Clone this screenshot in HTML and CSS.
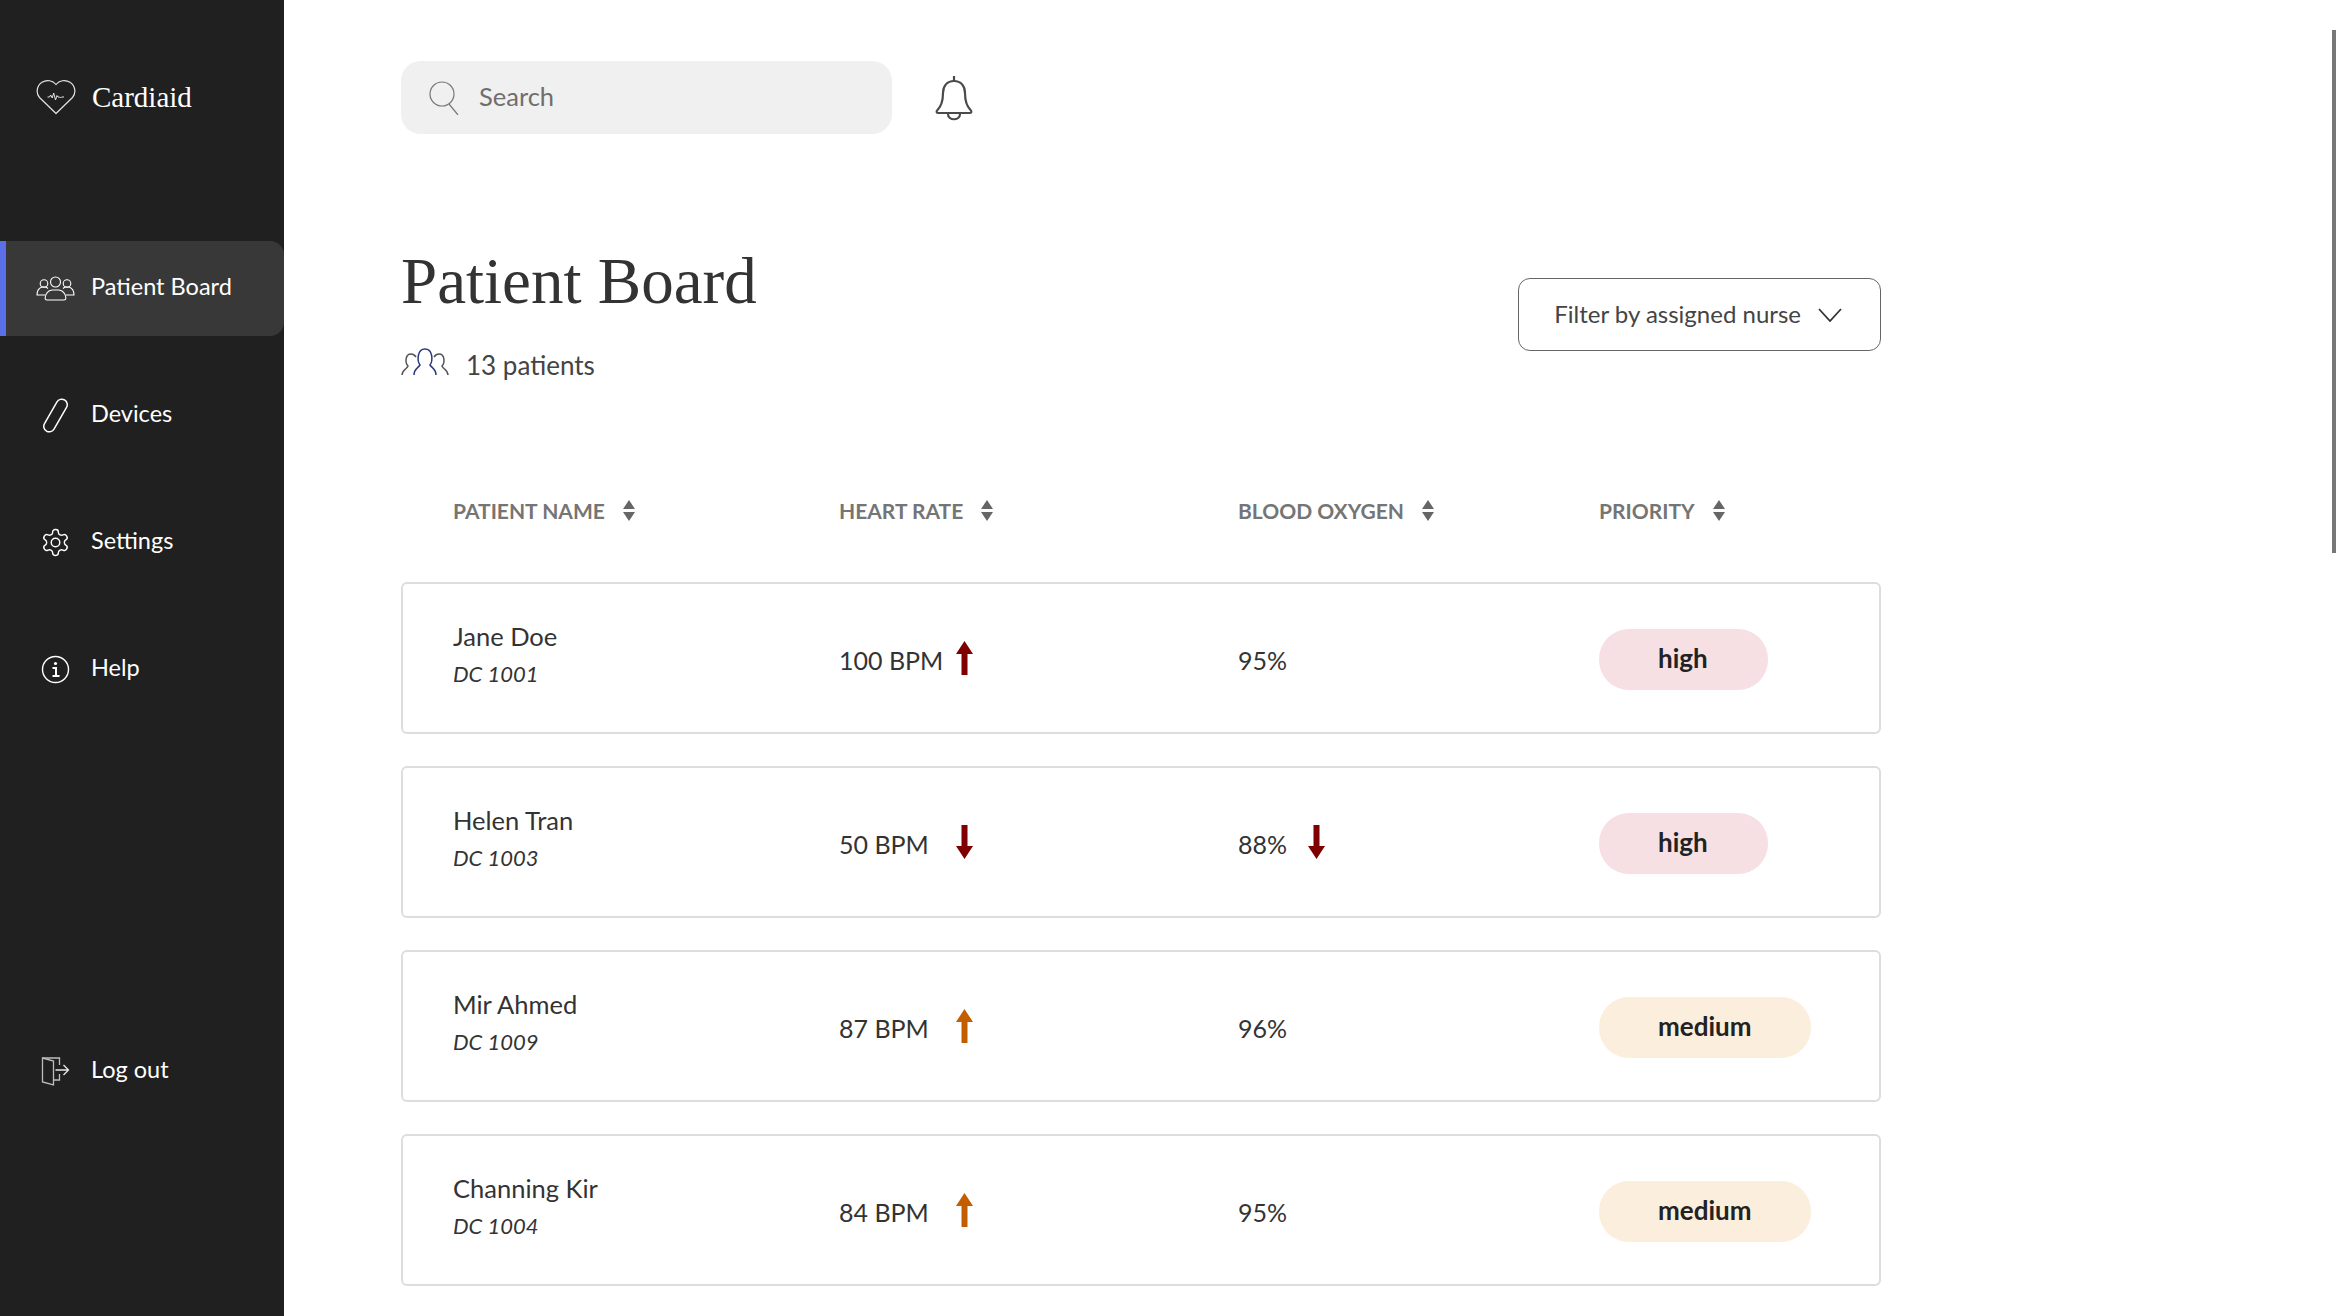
FILE: index.html
```html
<!DOCTYPE html>
<html lang="en">

<head>
    <meta charset="utf-8">
    <title>Cardiaid - Patient Board</title>
    <link rel="stylesheet" href="styles.css">
</head>

<body>
    <div class="app">
        <!-- sidebar -->
        <aside class="sidebar">
            <div class="brand">
                <svg class="brand-icon" viewBox="0 0 40 36" fill="none" stroke="#e4e4e4" stroke-width="1.2">
                    <path d="M20 34.5 3.5 18.5C-.5 14 .8 6.5 6 3.200 11 .2 16.800 1.500 20 5.500 23.200 1.500 29 .2 34 3.200 39.200 6.500 40.500 14 36.500 18.500Z" stroke-linejoin="round"/>
                    <path d="M11.500 18h2l1.200-2 1.500 3 1.500-5 1.800 7 1.500-4.500 1 1.500h1.500l1 1 1-1h2.500" stroke-width="1"/>
                </svg>
                <span class="brand-name">Cardiaid</span>
            </div>
            <nav class="nav-list">
                <a class="nav-item active" href="#">
                    <svg class="nav-icon" height="25" viewBox="0 0 39 25" fill="none" stroke="#fff" stroke-width="1.100">
                        <circle cx="19.500" cy="6" r="5"/>
                        <circle cx="8" cy="7.500" r="3.800"/>
                        <circle cx="31" cy="7.500" r="3.800"/>
                        <path d="M11 24h17c1.500 0 2-1 1.800-2.500-.6-4-3.300-7-6.800-7.500h-7c-3.500.5-6.200 3.500-6.800 7.500C9 23 9.500 24 11 24Z"/>
                        <path d="M9.500 19H1c0-4 2-7 5-8h4l2 1.500"/>
                        <path d="M29.500 19H38c0-4-2-7-5-8h-4l-2 1.500"/>
                    </svg>
                    <span>Patient Board</span>
                </a>
                <a class="nav-item" href="#">
                    <svg class="nav-icon" height="35" viewBox="0 0 26 35" fill="none" stroke="#fff" stroke-width="1.500">
                        <rect x="7.500" y="-.5" width="11" height="36" rx="5.500" transform="rotate(30 13 17.500)"/>
                    </svg>
                    <span>Devices</span>
                </a>
                <a class="nav-item" href="#">
                    <svg class="nav-icon" height="31" viewBox="0 0 24 24" fill="none" stroke="#fff" stroke-width="1.100">
                        <path d="M12.220 2h-.44a2 2 0 0 0-2 2v.18a2 2 0 0 1-1 1.730l-.43.25a2 2 0 0 1-2 0l-.15-.08a2 2 0 0 0-2.730.73l-.22.38a2 2 0 0 0 .73 2.730l.15.1a2 2 0 0 1 1 1.720v.51a2 2 0 0 1-1 1.740l-.15.09a2 2 0 0 0-.73 2.730l.22.38a2 2 0 0 0 2.730.73l.15-.08a2 2 0 0 1 2 0l.43.25a2 2 0 0 1 1 1.730V20a2 2 0 0 0 2 2h.44a2 2 0 0 0 2-2v-.18a2 2 0 0 1 1-1.730l.43-.25a2 2 0 0 1 2 0l.15.08a2 2 0 0 0 2.730-.73l.22-.39a2 2 0 0 0-.73-2.730l-.15-.08a2 2 0 0 1-1-1.740v-.5a2 2 0 0 1 1-1.740l.15-.09a2 2 0 0 0 .73-2.730l-.22-.38a2 2 0 0 0-2.730-.73l-.15.08a2 2 0 0 1-2 0l-.43-.25a2 2 0 0 1-1-1.730V4a2 2 0 0 0-2-2z"/>
                        <circle cx="12" cy="12" r="3.300"/>
                    </svg>
                    <span>Settings</span>
                </a>
                <a class="nav-item" href="#">
                    <svg class="nav-icon" height="29" viewBox="0 0 29 29" fill="none" stroke="#fff" stroke-width="1.400">
                        <circle cx="14.500" cy="14.500" r="13"/>
                        <path d="M11.500 13h3.500v8M11.500 21h7" stroke-width="2"/>
                        <circle cx="14.500" cy="8.500" r="1.600" fill="#fff" stroke="none"/>
                    </svg>
                    <span>Help</span>
                </a>
            </nav>
            <a class="nav-item" href="#">
                <svg class="nav-icon" height="29" viewBox="0 0 28 29" fill="none" stroke="#bdbdbd" stroke-width="1.300">
                    <path d="M1 1h17v7M18 17v6h-6"/>
                    <path d="M1 1l11 3v24L1 25Z"/>
                    <path d="M14 13h12M22 8l5 5-5 5" stroke="#e8e8e8"/>
                </svg>
                <span>Log out</span>
            </a>
        </aside>

        <main class="content">
            <div class="topbar">
                <div class="search-box">
                    <svg width="30" height="34" viewBox="0 0 30 34" fill="none" stroke="#777" stroke-width="1.200">
                        <circle cx="13" cy="13" r="12"/>
                        <path d="M20 23l9 11"/>
                    </svg>
                    <span class="search-text">Search</span>
                </div>
                <svg class="bell" width="38" height="46" viewBox="0 0 38 46" fill="none" stroke="#4a4a4a" stroke-width="2.200">
                    <path d="M19 1v5"/>
                    <path d="M19 6c-7 0-11 5-11 12 0 8-1.500 13-5.500 17-1.500 1.500-1 3 1 3h31c2 0 2.500-1.500 1-3-4-4-5.500-9-5.500-17 0-7-4-12-11-12Z" stroke-linejoin="round"/>
                    <path d="M13 39c0 7 12 7 12 0"/>
                </svg>
            </div>

            <div class="page-head">
                <div>
                    <h1 class="page-title">Patient Board</h1>
                    <div class="patient-count">
                        <svg width="48" height="28" viewBox="0 0 48 28" fill="none" stroke="#555" stroke-width="1.500">
                            <path d="M1 27c0-5 5-6 6-9-3-3-3-12 3-12 3 0 4 1.500 5 3"/>
                            <path d="M47 27c0-5-5-6-6-9 3-3 3-12-3-12-3 0-4 1.500-5 3"/>
                            <path d="M13 27c0-6 4-7 6-10-3-4-3-16 5-16s8 12 5 16c2 3 6 4 6 10" stroke="#2c3a7c"/>
                        </svg>
                        <span>13 patients</span>
                    </div>
                </div>
                <div class="filter-btn">
                    <span>Filter by assigned nurse</span>
                    <svg width="24" height="14" viewBox="0 0 24 14" fill="none" stroke="#333" stroke-width="1.800">
                        <path d="M1 1l11 12L23 1"/>
                    </svg>
                </div>
            </div>

            <div class="table-head row-grid">
                <div class="th">PATIENT NAME <span class="sort"><i class="up"></i><i class="down"></i></span></div>
                <div class="th">HEART RATE <span class="sort"><i class="up"></i><i class="down"></i></span></div>
                <div class="th">BLOOD OXYGEN <span class="sort"><i class="up"></i><i class="down"></i></span></div>
                <div class="th">PRIORITY <span class="sort"><i class="up"></i><i class="down"></i></span></div>
            </div>

            <div class="card row-grid">
                <div class="patient-cell">
                    <div class="p-name">Jane Doe</div>
                    <div class="p-id">DC 1001</div>
                </div>
                <div class="metric">
                    <span class="hr">100 BPM</span>
                    <svg class="arrow" width="17" height="34" viewBox="0 0 17 34"><path d="M8.500 0 17 13h-5.500v21h-6V13H0Z" fill="#7f0000"/></svg>
                </div>
                <div class="metric"><span class="ox">95%</span></div>
                <div><span class="pill high">high</span></div>
            </div>

            <div class="card row-grid">
                <div class="patient-cell">
                    <div class="p-name">Helen Tran</div>
                    <div class="p-id">DC 1003</div>
                </div>
                <div class="metric">
                    <span class="hr">50 BPM</span>
                    <svg class="arrow" width="17" height="34" viewBox="0 0 17 34"><path d="M8.500 34 0 21h5.500V0h6v21H17Z" fill="#7f0000"/></svg>
                </div>
                <div class="metric">
                    <span class="ox">88%</span>
                    <svg class="arrow" width="17" height="34" viewBox="0 0 17 34"><path d="M8.500 34 0 21h5.500V0h6v21H17Z" fill="#7f0000"/></svg>
                </div>
                <div><span class="pill high">high</span></div>
            </div>

            <div class="card row-grid">
                <div class="patient-cell">
                    <div class="p-name">Mir Ahmed</div>
                    <div class="p-id">DC 1009</div>
                </div>
                <div class="metric">
                    <span class="hr">87 BPM</span>
                    <svg class="arrow" width="17" height="34" viewBox="0 0 17 34"><path d="M8.500 0 17 13h-5.500v21h-6V13H0Z" fill="#c25e00"/></svg>
                </div>
                <div class="metric"><span class="ox">96%</span></div>
                <div><span class="pill medium">medium</span></div>
            </div>

            <div class="card row-grid">
                <div class="patient-cell">
                    <div class="p-name">Channing Kir</div>
                    <div class="p-id">DC 1004</div>
                </div>
                <div class="metric">
                    <span class="hr">84 BPM</span>
                    <svg class="arrow" width="17" height="34" viewBox="0 0 17 34"><path d="M8.500 0 17 13h-5.500v21h-6V13H0Z" fill="#c25e00"/></svg>
                </div>
                <div class="metric"><span class="ox">95%</span></div>
                <div><span class="pill medium">medium</span></div>
            </div>
        </main>
    </div>
    <div class="scroll-thumb"></div>
</body>

</html>
```

FILE: styles.css
```css
* {
    box-sizing: border-box;
}

html,
body {
    margin: 0;
    height: 1316px;
    overflow: hidden;
    background: #fff;
}

body {
    font-family: "Lato", "Noto Sans", sans-serif;
    color: #333;
}

.app {
    display: flex;
    height: 1316px;
}

/* sidebar */
.sidebar {
    width: 284px;
    flex-shrink: 0;
    display: flex;
    flex-direction: column;
    padding-bottom: 197px;
    background: #202020;
}

.brand {
    display: flex;
    align-items: center;
    gap: 16px;
    height: 241px;
    padding: 0 0 47px 36px;
}

.brand-icon {
    width: 40px;
    height: 36px;
}

.brand-name {
    font-family: "Liberation Serif", serif;
    font-size: 29px;
    color: #fff;
}

.nav-list {
    flex: 1;
    display: flex;
    flex-direction: column;
    gap: 32px;
}

.nav-item {
    display: flex;
    align-items: center;
    height: 95px;
    padding-left: 36px;
    font-size: 23.5px;
    color: #fff;
    text-decoration: none;
}

.nav-item span {
    margin-left: 16px;
    padding-bottom: 6px;
}

.nav-icon {
    width: 39px;
    flex-shrink: 0;
}

.nav-item.active {
    background: #383838;
    border-left: 6px solid #5a6fe8;
    border-radius: 0 14px 14px 0;
    padding-left: 30px;
}

/* main */
.content {
    width: 1597px;
    padding: 61px 0 0 117px;
}

.topbar {
    display: flex;
    align-items: center;
    gap: 43px;
}

.search-box {
    display: flex;
    align-items: center;
    gap: 20px;
    width: 491px;
    height: 73px;
    padding-left: 28px;
    background: #f0f0f0;
    border-radius: 20px;
}

.search-text {
    padding-bottom: 4px;
    font-size: 25.5px;
    color: #6e6e6e;
}

.page-head {
    display: flex;
    justify-content: space-between;
    align-items: flex-start;
    margin-top: 107px;
}

.page-title {
    margin: 0;
    font-family: "Liberation Serif", serif;
    font-size: 65px;
    font-weight: 400;
    line-height: 80px;
    color: #333;
}

.patient-count {
    display: flex;
    align-items: center;
    gap: 17px;
    margin-top: 28px;
    font-size: 26px;
    color: #444;
}

.patient-count svg {
    margin-top: -6px;
}

.filter-btn {
    display: flex;
    align-items: center;
    gap: 17px;
    height: 73px;
    margin-top: 37px;
    padding: 0 38px 0 35px;
    border: 1px solid #666;
    border-radius: 12px;
    font-size: 24px;
    color: #444;
}

.filter-btn span {
    padding-bottom: 3px;
}

/* table */
.row-grid {
    display: grid;
    grid-template-columns: 386px 399px 361px 1fr;
    align-items: center;
    width: 1480px;
    padding-left: 50px;
}

.table-head {
    height: 60px;
    margin-top: 99px;
    padding-left: 52px;
    margin-bottom: 42px;
}

.th {
    display: flex;
    align-items: center;
    gap: 18px;
    font-size: 21px;
    font-weight: 700;
    color: #757575;
}

.sort {
    display: flex;
    flex-direction: column;
    gap: 3px;
}

.sort i {
    display: block;
    width: 0;
    height: 0;
    border-left: 6px solid transparent;
    border-right: 6px solid transparent;
}

.sort .up {
    border-bottom: 9px solid #666;
}

.sort .down {
    border-top: 9px solid #666;
}

.card {
    height: 152px;
    margin-bottom: 32px;
    border: 2px solid #ddd;
    border-radius: 6px;
}

.patient-cell {
    padding-bottom: 6px;
}

.p-name {
    margin-top: -3px;
    font-size: 25.5px;
    line-height: 34px;
    color: #333;
}

.p-id {
    margin-top: 6px;
    font-size: 22px;
    font-style: italic;
    line-height: 30px;
    color: #333;
}

.metric {
    display: flex;
    align-items: center;
    gap: 16px;
    padding-top: 3px;
    font-size: 25px;
    color: #333;
}

.metric .arrow {
    margin-top: -3px;
}

.hr {
    width: 101px;
    white-space: nowrap;
}

.ox + .arrow {
    margin-left: 5px;
}

.pill {
    display: inline-block;
    height: 61px;
    margin-top: 3px;
    padding: 0 60px 0 59px;
    border-radius: 30px;
    font-size: 26px;
    font-weight: 700;
    line-height: 59px;
    color: #222;
}

.pill.high {
    background: #f6e0e3;
}

.pill.medium {
    background: #fbeedd;
}

.scroll-thumb {
    position: absolute;
    top: 30px;
    right: 4px;
    width: 4px;
    height: 523px;
    background: #777;
}
```
